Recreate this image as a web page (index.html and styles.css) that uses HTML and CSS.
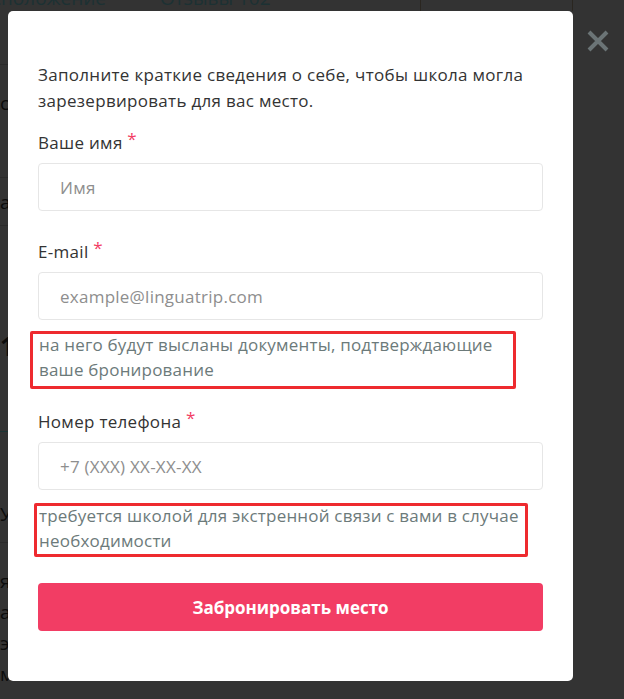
FILE: index.html
```html
<!DOCTYPE html>
<html lang="ru">
<head>
<meta charset="utf-8">
<title>Бронирование</title>
<link rel="stylesheet" href="styles.css">
</head>
<body>
<div class="page">
  <div class="tabs">
    <span class="tab tab-first">Расположение</span>
    <span class="tab">Отзывы 102</span>
    <span class="tab-sep sep-a"></span>
    <span class="tab-sep sep-b"></span>
  </div>
  <div class="blk blk-2"><span>с</span></div>
  <div class="blk blk-4"><span>а</span></div>
  <div class="blk blk-5"><span class="big">1</span></div>
  <div class="blk blk-6"><span>У</span></div>
  <div class="page-list">
    <div>я</div>
    <div>ам</div>
    <div>э</div>
    <div>м</div>
  </div>
</div>

<div class="overlay">
  <div class="modal">
    <p class="intro">Заполните краткие сведения о себе, чтобы школа могла зарезервировать для вас место.</p>

    <div class="field">
      <label class="label">Ваше имя <span class="req">*</span></label>
      <div class="input">Имя</div>
    </div>

    <div class="field field-email">
      <label class="label">E-mail <span class="req">*</span></label>
      <div class="input">example@linguatrip.com</div>
      <p class="hint hint-email"><span class="hint-text">на него будут высланы документы, подтверждающие ваше бронирование</span></p>
    </div>

    <div class="field field-phone">
      <label class="label">Номер телефона <span class="req">*</span></label>
      <div class="input">+7 (XXX) XX-XX-XX</div>
      <p class="hint hint-phone"><span class="hint-text">требуется школой для экстренной связи с вами в случае необходимости</span></p>
    </div>

    <button class="submit" type="button">Забронировать место</button>
  </div>
  <button class="close" type="button" aria-label="Закрыть">
    <svg width="24" height="24" viewBox="0 0 24 24"><path d="M3 3 L21 21 M21 3 L3 21" stroke="#6b7476" stroke-width="4" fill="none"/></svg>
  </button>
</div>
</body>
</html>
```
FILE: styles.css
```css
* { box-sizing: border-box; }
html, body { margin: 0; height: 100%; }
body {
  background: #333333;
  font-family: "Open Sans", "Liberation Sans", sans-serif;
  overflow: hidden;
}

/* dimmed page behind the overlay */
.page {
  width: 570px;
  color: #0b0b0b;
  font-size: 19px;
}
.tabs {
  display: flex;
  height: 65px;
  border-bottom: 1px solid #2b2b2b;
}
.tab {
  flex-shrink: 0;
  white-space: nowrap;
  color: #1c3133;
  font-size: 19px;
  line-height: 22px;
  margin-top: -13px;
  height: 24px;
}
.tab-first { margin-left: -30px; width: 190px; }
.tab-sep {
  flex-shrink: 0;
  width: 1px;
  height: 11px;
  background: #2a2620;
}
.sep-a { margin-left: 149px; }
.sep-b { margin-left: 151px; }
.blk {
  display: flex;
  align-items: flex-start;
  border-bottom: 1px solid #2b2b2b;
}
.blk span { line-height: 26px; }
.blk-2 { height: 113px; padding-top: 25px; }
.blk-4 { height: 48px; padding-top: 11px; }
.blk-5 { height: 206px; padding-top: 102px; border-bottom-color: #1d3535; }
.blk-5 .big { font-weight: 700; font-size: 26px; line-height: 36px; }
.blk-6 { height: 111px; padding-top: 69px; }
.page-list { padding-top: 23px; line-height: 31px; }

.overlay {
  position: fixed;
  inset: 0;
  padding: 11px 0 0 8px;
}
.modal {
  width: 565px;
  height: 670px;
  background: #ffffff;
  border-radius: 5px;
  padding: 51px 30px 0 30px;
  color: #333333;
}
.intro {
  margin: 0;
  font-size: 17px;
  line-height: 26px;
  letter-spacing: 0.3px;
}
.field { margin-top: 17px; }
.field-email { margin-top: 29px; }
.field-phone { margin-top: 21px; }
.label {
  display: block;
  font-size: 17px;
  line-height: 24px;
  letter-spacing: 0.3px;
  color: #333333;
}
.req { color: #f23d64; position: relative; top: -4px; }
.input {
  margin-top: 8px;
  height: 48px;
  border: 1px solid #e6e6e6;
  border-radius: 4px;
  padding: 0 21px;
  display: flex;
  align-items: center;
  font-size: 17px;
  letter-spacing: 0.25px;
  color: #8e8e8e;
}
.hint {
  margin: 11px 0 0 -8px;
  border: 3px solid #ee2a2f;
  border-radius: 2px;
  padding: 0 6px 4px 6px;
  font-size: 17px;
  line-height: 25px;
  letter-spacing: 0.2px;
  color: #6c7a7a;
}
.hint-text { display: block; margin-top: -2px; }
.hint-email { width: 486px; }
.hint-phone {
  width: 494px;
  margin-left: -4px;
  padding: 0 0 1px 2px;
  margin-top: 13px;
}
.hint-phone .hint-text { margin-top: -3px; }

.submit {
  display: block;
  width: 100%;
  margin-top: 26px;
  height: 48px;
  border: none;
  border-radius: 4px;
  background: #f23d64;
  color: #ffffff;
  font-family: inherit;
  font-size: 17px;
  font-weight: 700;
}

.close {
  position: absolute;
  left: 586px;
  top: 29px;
  width: 24px;
  height: 24px;
  padding: 0;
  border: none;
  background: none;
}
.close svg { display: block; }
```
